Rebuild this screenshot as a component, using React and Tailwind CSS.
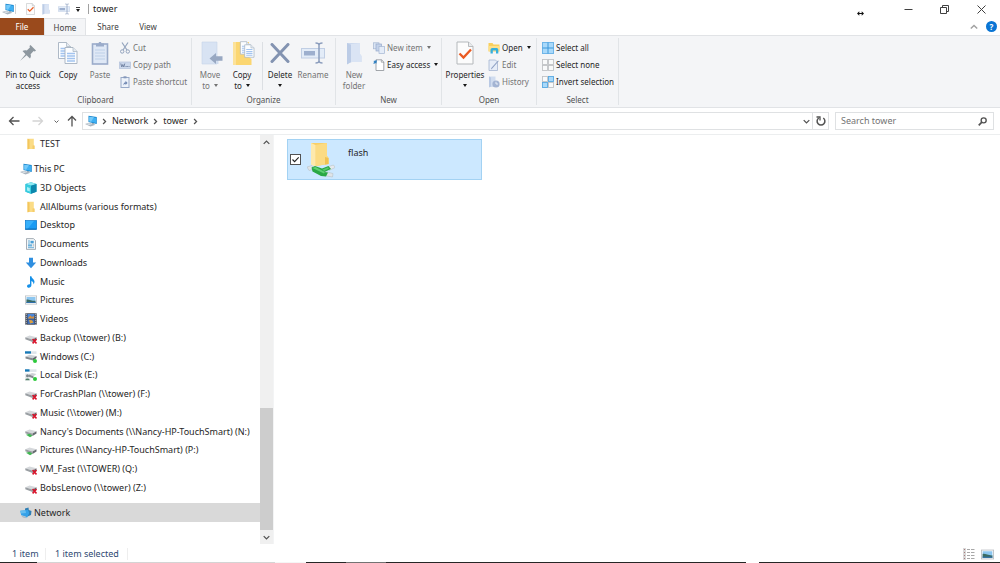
import React, { useState } from "react";

/* ---------- icons ---------- */

function ComputerIcon({ className }) {
  return (
    <svg viewBox="0 0 24 24" className={className} aria-hidden="true">
      <path d="M7 1.500 L23.500 4 L23.500 18 L7 14 Z" fill="#1583cb" />
      <path d="M8.500 3.300 L22.300 5.400 L22.300 16.200 L8.500 12.800 Z" fill="#3fb0f3" />
      <path d="M8.500 3.300 L18 4.700 L12 13.600 L8.500 12.800 Z" fill="#74cafa" />
      <path d="M14 15.800 L18 16.800 L19 19 L15 18.500 Z" fill="#6f8796" />
      <path d="M0 18 L8 15.500 L21 19.500 L11 23 Z" fill="#aab5bf" />
      <path d="M2.500 18 L8 16.500 L14 18.400 L8 20.200 Z" fill="#dde3e8" />
    </svg>
  );
}

function PropertiesIcon({ className }) {
  return (
    <svg viewBox="0 0 18 24" className={className} aria-hidden="true">
      <path d="M1 1 H12.500 L17 5.500 V23 H1 Z" fill="#fcfcfc" stroke="#b4b8bb" />
      <path d="M12.500 1 V5.500 H17" fill="#e9ebed" stroke="#a9adb1" strokeWidth=".8" />
      <path d="M3.500 12.500 L7.500 16.500 L15 8.500" fill="none" stroke="#ea5a22" strokeWidth="2.300" />
    </svg>
  );
}

function PaleFolderIcon({ className }) {
  return (
    <svg viewBox="0 0 16 24" className={className} aria-hidden="true">
      <path d="M1 2 H14 V13 L15.500 15 V21 H6 L1 23 Z" fill="#ccd9ee" />
      <path d="M1 2 L5 4 V21 L1 23.500 Z" fill="#bccce6" />
      <path d="M5 3 L14 2 V13 L15.500 15 V21 H5 Z" fill="#dae4f4" />
    </svg>
  );
}

function RenameIcon({ className }) {
  return (
    <svg viewBox="0 0 24 22" className={className} aria-hidden="true">
      <rect x=".5" y="6.500" width="23" height="9.500" fill="#e3ecf8" stroke="#c0cee4" />
      <rect x="3" y="9" width="11" height="4.500" fill="#9dafce" />
      <path d="M14.500 1 C16.500 1 18 1.500 18 3 V19 C18 20.500 16.500 21 14.500 21 M21.500 1 C19.500 1 18 1.500 18 3 M21.500 21 C19.500 21 18 20.500 18 19" fill="none" stroke="#8b9dbd" strokeWidth="1.500" />
    </svg>
  );
}

function PinIcon({ className }) {
  return (
    <svg viewBox="0 0 18 18" className={className} aria-hidden="true">
      <path d="M11.500 1 L17 6.500 L15.800 7.500 L14.600 7.100 L11.600 10.200 C12.200 12 11.900 13.300 11 14.400 L7.600 11.300 L1 17 L6.500 10.300 L3.500 7 C4.600 6.100 6.200 5.900 7.800 6.400 L10.900 3.500 L10.500 2.100 Z" fill="#8d979f" />
    </svg>
  );
}

function Sheet({ x, y }) {
  return (
    <g transform={"translate(" + x + " " + y + ")"}>
      <path d="M.5 .5 H8.500 L12.500 4.500 V16.500 H.5 Z" fill="#fbfdff" stroke="#a5b1bf" strokeWidth=".9" />
      <path d="M8.500 .5 V4.500 H12.500" fill="#e5eaf0" stroke="#a5b1bf" strokeWidth=".7" />
      <path d="M2.500 6.500 H10.500 M2.500 9 H10.500 M2.500 11.500 H10.500 M2.500 14 H10.500" stroke="#a3c4ef" strokeWidth="1.300" />
    </g>
  );
}

function CopyIcon({ className }) {
  return (
    <svg viewBox="0 0 20 24" className={className} aria-hidden="true">
      <Sheet x="0" y="1" />
      <Sheet x="6.500" y="6" />
    </svg>
  );
}

function PasteIcon({ className }) {
  return (
    <svg viewBox="0 0 18 24" className={className} aria-hidden="true">
      <rect x="1.500" y="3" width="15" height="20" fill="#dfe8f6" stroke="#9aabca" strokeWidth="1.600" />
      <path d="M5 5.500 V2.500 H7.500 L8 1 H10 L10.500 2.500 H13 V5.500 Z" fill="#9aabca" />
      <path d="M4 9 H14 M4 12 H14 M4 15 H14 M4 18 H14" stroke="#c9d7ed" strokeWidth="1.400" />
    </svg>
  );
}

function CutIcon({ className }) {
  return (
    <svg viewBox="0 0 12 12" className={className} aria-hidden="true">
      <path d="M3 .5 L8 8 M9 .5 L4 8" stroke="#93a3bd" strokeWidth="1.200" />
      <circle cx="3.200" cy="9.500" r="1.700" fill="none" stroke="#93a3bd" />
      <circle cx="8.800" cy="9.500" r="1.700" fill="none" stroke="#93a3bd" />
    </svg>
  );
}

function CopyPathIcon({ className }) {
  return (
    <svg viewBox="0 0 12 12" className={className} aria-hidden="true">
      <rect x=".4" y="3" width="11.200" height="6.500" fill="#ccd8ec" stroke="#b3c1da" strokeWidth=".7" />
      <path d="M1.800 4.500 L2.800 8 L3.800 5.500 L4.800 8 L5.800 4.500" fill="none" stroke="#6d7f9f" strokeWidth=".9" />
      <path d="M6.500 7.500 H10.500" stroke="#6d7f9f" strokeWidth=".9" strokeDasharray="1.200 .5" />
    </svg>
  );
}

function PasteShortcutIcon({ className }) {
  return (
    <svg viewBox="0 0 12 12" className={className} aria-hidden="true">
      <rect x="2" y="1.500" width="8" height="10" fill="#edf2fa" stroke="#97a9c8" />
      <rect x="4.500" y=".3" width="3" height="2" fill="#8598ba" />
      <path d="M4.500 9.500 C4.300 7.500 5 6.500 6.500 6.300 V4.800 L8.600 7 L6.500 9 V7.800 C5.500 7.800 5 8.500 4.500 9.500 Z" fill="#7188b2" />
    </svg>
  );
}

function MoveToIcon({ className }) {
  return (
    <svg viewBox="0 0 22 24" className={className} aria-hidden="true">
      <path d="M1 1 H16 V17 L17.500 18.500 V23 H1 Z" fill="#d2deef" />
      <path d="M1 1 H16 V23 H1 Z" fill="#d8e3f3" stroke="#c6d4e9" strokeWidth=".6" />
      <path d="M8.500 17.500 L15 12 V15.300 H21.500 V19.700 H15 V23 Z" fill="#98a8c2" />
    </svg>
  );
}

function CopyToIcon({ className }) {
  return (
    <svg viewBox="0 0 22 24" className={className} aria-hidden="true">
      <path d="M0 1 H16 V16 L18.500 18 V24 H0 Z" fill="#fbd671" />
      <path d="M0 1 H3 V24 H0 Z" fill="#fce29a" />
      <g transform="translate(7 -.5) scale(.78)">
        <Sheet x="0" y="1" />
        <Sheet x="5.500" y="5" />
      </g>
    </svg>
  );
}

function DeleteIcon({ className }) {
  return (
    <svg viewBox="0 0 20 20" className={className} aria-hidden="true">
      <path d="M2 1.500 L18 18.500 M18 1.500 L2 18.500" stroke="#8393b1" strokeWidth="3" strokeLinecap="round" />
    </svg>
  );
}

function NewItemIcon({ className }) {
  return (
    <svg viewBox="0 0 12 12" className={className} aria-hidden="true">
      <rect x=".5" y=".8" width="5.500" height="6" fill="#dbe5f4" stroke="#a4b5d2" strokeWidth=".7" />
      <rect x="3" y="2" width="5.500" height="7" fill="#c3d2ea" stroke="#96a9ca" strokeWidth=".7" />
      <rect x="6" y="4.500" width="5.500" height="7" fill="#e4ecf8" stroke="#a4b5d2" strokeWidth=".7" />
    </svg>
  );
}

function EasyAccessIcon({ className }) {
  return (
    <svg viewBox="0 0 12 12" className={className} aria-hidden="true">
      <path d="M3 .8 H8.500 L10.800 3 V11.500 H3 Z" fill="#fff" stroke="#8b9197" strokeWidth=".8" />
      <path d="M8.300 .8 V3.200 H10.800" fill="none" stroke="#8b9197" strokeWidth=".7" />
      <path d="M.3 2 L4 1.200 L3.300 4.800 L2.300 3.900 L.9 5 L.3 4 L1.400 3 Z" fill="#2f7fc1" />
    </svg>
  );
}

function OpenIcon({ className }) {
  return (
    <svg viewBox="0 0 12 12" className={className} aria-hidden="true">
      <path d="M.5 1 H4.500 L5.500 2.500 H11.500 V9.500 H.5 Z" fill="#f8cf5c" />
      <path d="M.5 4 H11.500 V9 H.5 Z" fill="#fde08a" />
      <path d="M2.500 11.500 V8 C2.500 6.500 3.500 6 5 6 H8 C9.500 6 10.300 6.500 10.300 8 V11.500 H8 V8.600 H4.800 V11.500 Z" fill="#35b0dd" />
    </svg>
  );
}

function EditIcon({ className }) {
  return (
    <svg viewBox="0 0 12 12" className={className} aria-hidden="true">
      <path d="M1 1 H7.500 L9.500 3 V11.500 H1 Z" fill="#e6edf8" stroke="#a5b5d1" strokeWidth=".8" />
      <path d="M10.800 2 L4 9.800 L3 10.500 L3.300 9 L10 1.500 Z" fill="#8c9fc3" />
    </svg>
  );
}

function HistoryIcon({ className }) {
  return (
    <svg viewBox="0 0 12 12" className={className} aria-hidden="true">
      <path d="M1 .5 H7.500 V11 H1 Z" fill="#d0dcef" />
      <path d="M1 .5 L3 1.500 V10.500 L1 11.500 Z" fill="#b9c9e4" />
      <circle cx="8" cy="8" r="3.600" fill="#a3b4d3" />
      <path d="M8 5.800 V8 H10" fill="none" stroke="#eef3fb" strokeWidth=".9" />
    </svg>
  );
}

function Squares({ className, filled, joined }) {
  const spots = [[0.5, 0.5], [6.5, 0.5], [0.5, 6.5], [6.5, 6.5]];
  if (joined) {
    return (
      <svg viewBox="0 0 12 12" className={className} aria-hidden="true">
        <rect x=".5" y=".5" width="11" height="11" fill="#a9d9fa" stroke="#6fb5e8" />
        <path d="M6 .5 V11.500 M.5 6 H11.500" stroke="#3d98da" />
      </svg>
    );
  }
  return (
    <svg viewBox="0 0 12 12" className={className} aria-hidden="true">
      {spots.map(([x, y], i) => (
        <rect
          key={i}
          x={x}
          y={y}
          width="5"
          height="5"
          fill={filled[i] ? "#a9d9fa" : "#f9fafb"}
          stroke={filled[i] ? "#58a8e0" : "#c0c3c6"}
          strokeWidth=".9"
        />
      ))}
    </svg>
  );
}

function SmallFolder({ className }) {
  return (
    <svg viewBox="0 0 12 12" className={className} aria-hidden="true">
      <path d="M2.500 .8 H8.800 V7 L9.500 8 V11 H2.500 Z" fill="#fbdc86" />
      <path d="M2.500 .8 L4.500 1.600 V10.800 L2.500 11.600 Z" fill="#f3c65c" />
      <path d="M7.500 7.500 H9.500 V11 H7.500 Z" fill="#f5cd6b" />
    </svg>
  );
}

function ObjectsIcon({ className }) {
  return (
    <svg viewBox="0 0 12 12" className={className} aria-hidden="true">
      <path d="M.5 2 L6 .3 L11.500 2 V9.800 L6 11.700 L.5 9.800 Z" fill="#17a9c7" />
      <path d="M.5 2 L6 .3 L11.500 2 L6 3.800 Z" fill="#8de9f3" />
      <path d="M.5 2 L6 3.800 V11.700 L.5 9.800 Z" fill="#37cde0" />
      <path d="M6 3.800 L11.500 2 V9.800 L6 11.700 Z" fill="#0c87ad" />
      <path d="M2 5 L4.800 5.900 V9.500 L2 8.600 Z" fill="#a5f0f7" />
    </svg>
  );
}

function DesktopIcon({ className }) {
  return (
    <svg viewBox="0 0 12 12" className={className} aria-hidden="true">
      <rect x=".4" y="1.600" width="11.200" height="8.800" fill="#1a9bf4" stroke="#0d78c8" strokeWidth=".7" />
      <path d="M.8 2 H9 L2.500 10 H.8 Z" fill="#37b0fb" />
      <path d="M.5 10 H11.500" stroke="#0a5c9e" strokeWidth=".7" />
    </svg>
  );
}

function DocumentsIcon({ className }) {
  return (
    <svg viewBox="0 0 12 12" className={className} aria-hidden="true">
      <path d="M1.500 .6 H8.500 L10.500 2.600 V11.400 H1.500 Z" fill="#f4f7f9" stroke="#8f9ba5" strokeWidth=".8" />
      <path d="M3 3 H5 M3 5 H5 M3 9.700 H9" stroke="#5aa5d4" strokeWidth=".9" />
      <rect x="5.500" y="2.800" width="3.200" height="2.600" fill="#4a9fd6" />
      <rect x="3" y="6.300" width="4" height="2.200" fill="#6ab2de" />
      <path d="M7.700 6.800 H9.200 M7.700 8 H9.200" stroke="#7f8d98" strokeWidth=".6" />
    </svg>
  );
}

function DownloadsIcon({ className }) {
  return (
    <svg viewBox="0 0 12 12" className={className} aria-hidden="true">
      <path d="M4 .8 H8 V5.500 H11.200 L6 11.300 L.8 5.500 H4 Z" fill="#2f8fe0" />
    </svg>
  );
}

function MusicIcon({ className }) {
  return (
    <svg viewBox="0 0 12 12" className={className} aria-hidden="true">
      <path d="M5 .3 H6.400 C6.600 2.500 9.700 3.300 9.500 6 C9.400 7 9 7.800 8.400 8.400 C8.700 6.500 7.800 5.500 6.400 5 V9.300 C6.400 10.700 5.200 11.700 3.800 11.700 C2.700 11.700 2 11 2 10.200 C2 9 3.300 8.100 5 8.300 Z" fill="#1590e8" />
    </svg>
  );
}

function PicturesIcon({ className }) {
  return (
    <svg viewBox="0 0 12 12" className={className} aria-hidden="true">
      <rect x=".4" y="1.900" width="11.200" height="8.200" fill="#fff" stroke="#b9bec2" strokeWidth=".8" />
      <rect x="1.500" y="3" width="9" height="6" fill="#8cc6f0" />
      <path d="M1.500 5.500 C4 5 6.500 7 10.500 6.800 V9 H1.500 Z" fill="#3b6b62" />
      <path d="M1.500 8 H10.500 V9 H1.500 Z" fill="#2f6fae" />
    </svg>
  );
}

function VideosIcon({ className }) {
  return (
    <svg viewBox="0 0 12 12" className={className} aria-hidden="true">
      <rect x=".3" y=".3" width="11.400" height="11.400" fill="#3a3f4a" />
      <path d="M1.300 .8 V11.500 M10.700 .8 V11.500" stroke="#d7dade" strokeWidth="1" strokeDasharray="1 1" />
      <rect x="2.500" y="1" width="7" height="4.700" fill="#4a86d8" />
      <rect x="2.500" y="6.300" width="7" height="4.700" fill="#3c6fbd" />
      <path d="M3 5 L5.500 2.500 L7 4 L9 3 V5.500 H3 Z" fill="#d68f3c" />
      <path d="M4 7 L7 7.300 L8.500 9.500 L5 10.500 Z" fill="#e0a23f" />
    </svg>
  );
}

function Drive() {
  return (
    <g>
      <path d="M.3 5.200 L4.500 3.500 L11.500 5.300 L7.500 7.500 Z" fill="#d5d8db" />
      <path d="M.3 5.200 L7.500 7.500 V10 L.3 7.300 Z" fill="#9a9fa3" />
      <path d="M7.500 7.500 L11.500 5.300 V7.600 L7.500 10 Z" fill="#666b70" />
    </g>
  );
}

function OfflineDriveIcon({ className }) {
  return (
    <svg viewBox="0 0 12 12" className={className} aria-hidden="true">
      <Drive />
      <path d="M7.600 7 L11.500 11.400 M11.500 7 L7.600 11.400" stroke="#d8142b" strokeWidth="1.600" />
    </svg>
  );
}

function NetworkDriveIcon({ className }) {
  return (
    <svg viewBox="0 0 12 12" className={className} aria-hidden="true">
      <Drive />
      <path d="M1 8.800 L4.500 7.800 L7.500 9.800 L5 11.200 Z" fill="#42b553" />
    </svg>
  );
}

function LocalDriveIcon({ className }) {
  return (
    <svg viewBox="0 0 12 12" className={className} aria-hidden="true">
      <rect x="0" y=".3" width="11.500" height="2.600" fill="#dfe5ea" />
      <rect x="0" y=".3" width="6" height="2.300" fill="#1679b8" />
      <path d="M.5 5.500 L4.500 3.800 L11.500 5 L8 7.300 Z" fill="#cdd1d5" />
      <path d="M.5 5.500 L8 7.300 V9.600 L.5 7.400 Z" fill="#858b90" />
      <path d="M8 7.300 L11.500 5 V7 L8 9.600 Z" fill="#5d6267" />
      <circle cx="10" cy="10" r="2" fill="#2bc93a" />
    </svg>
  );
}

function UserDriveIcon({ className }) {
  return (
    <svg viewBox="0 0 12 12" className={className} aria-hidden="true">
      <rect x="0" y=".3" width="11.500" height="2.600" fill="#dfe5ea" />
      <rect x="0" y=".3" width="4.500" height="2.300" fill="#1679b8" />
      <rect x="0" y="4.500" width="5.500" height="7" fill="#e6eaec" />
      <path d="M4 5.500 L7 4 L11.500 5 L8.500 7.300 Z" fill="#cdd1d5" />
      <path d="M4 5.500 L8.500 7.300 V9.600 L4 7.800 Z" fill="#858b90" />
      <circle cx="2.500" cy="6.700" r="1.500" fill="#7b858c" />
      <path d="M.3 11.300 C.3 8.800 4.700 8.800 4.700 11.300 Z" fill="#4f7f68" />
      <circle cx="10" cy="10" r="2" fill="#2bc93a" />
    </svg>
  );
}

function NetworkIcon({ className }) {
  return (
    <svg viewBox="0 0 12 12" className={className} aria-hidden="true">
      <path d="M5 1.500 L8.500 .5 L8.800 3 L11.500 4 L11 8 L7.500 9.500 L5 8 Z" fill="#2f7fb5" />
      <path d="M.3 3.800 L5.500 3.200 L8 2.800 L9.300 6 L7 10.800 L5 9.300 L1.200 8.300 Z" fill="#35a1e8" />
      <path d="M.3 3.800 L5.500 3.200 L6 6 L.8 6.500 Z" fill="#66bdf0" />
      <path d="M1.500 9 L5 9.600 L6.500 11.300 L3 10.500 Z" fill="#9fb4c4" />
    </svg>
  );
}

function NetworkFolderIcon({ className }) {
  return (
    <svg viewBox="0 0 28 36" className={className} aria-hidden="true">
      <path d="M4 1 L20 1 V14 L21.500 16 V22 L9 24 L4 22 Z" fill="#f8cf67" />
      <path d="M8.500 3 L20 1 V14 L21.500 16 V22 L8.500 24 Z" fill="#fbdb83" />
      <path d="M4 1 L8.500 3 V25 L4 22.500 Z" fill="#fde9ad" />
      <path d="M18 15 L21.500 16 V22 L18 22.500 Z" fill="#f1c252" />
      <path d="M0 25 L5 23.500 L7 27 L2 28.500 Z" fill="#dfe4e8" stroke="#b3babf" strokeWidth=".5" />
      <path d="M20 25 L26.500 23 L28 25.500 L22 28.500 Z" fill="#e6eaed" stroke="#b3babf" strokeWidth=".5" />
      <path d="M18 29.500 L26 31.500 L25.500 35 L17 33.500 Z" fill="#dfe4e8" stroke="#b3babf" strokeWidth=".5" />
      <path d="M4.500 25.500 L8 24 L15 26.500 L21.500 24 L24 27 L17.500 30 L21 30.500 L19 34.500 L14 34 L5.500 29.500 Z" fill="#2aa844" />
      <path d="M5.500 26 L8.500 25 L18 30 L17 31.500 Z" fill="#5fd073" />
      <path d="M15.500 27.500 L21 25.300 L22 26.500 L17 29 Z" fill="#58c86c" />
    </svg>
  );
}

function Caret({ className = "text-neutral-900" }) {
  return (
    <svg viewBox="0 0 4 3" className={"h-[3px] w-1 shrink-0 " + className} aria-hidden="true">
      <path d="M0 0 H4 L2 3 Z" fill="currentColor" />
    </svg>
  );
}

function Chevron({ d, className }) {
  return (
    <svg viewBox="0 0 10 10" className={className} aria-hidden="true">
      <path d={d} fill="none" stroke="currentColor" strokeWidth="1.800" />
    </svg>
  );
}

const RIGHT = "M3 1.500 L6.500 5 L3 8.500";
const DOWN = "M1 3 L5 7 L9 3";
const UP = "M1 7 L5 3 L9 7";

/* ---------- ribbon ---------- */

function BigButton({ icon: Icon, iconClass, width, lines, caret, disabled }) {
  return (
    <button
      type="button"
      disabled={disabled}
      className={width + " flex shrink-0 flex-col items-center pt-[3px] leading-[11px] " + (disabled ? "text-neutral-500" : "text-neutral-800")}
    >
      <span className="mb-1 flex h-6 items-center">
        <Icon className={iconClass} />
      </span>
      {lines.map((line, i) => (
        <span key={line} className="flex items-center gap-1 whitespace-nowrap">
          {line}
          {caret === "inline" && i === lines.length - 1 && (
            <Caret className={disabled ? "text-neutral-500" : "text-neutral-900"} />
          )}
        </span>
      ))}
      {caret === "below" && (
        <span className="flex h-[11px] items-center">
          <Caret />
        </span>
      )}
    </button>
  );
}

function SmallButton({ icon, label, caret, disabled }) {
  return (
    <button
      type="button"
      disabled={disabled}
      className={"flex h-[17px] items-center gap-0.5 whitespace-nowrap " + (disabled ? "text-neutral-500" : "text-neutral-800")}
    >
      {icon}
      <span>{label}</span>
      {caret && <span className="pl-0.5"><Caret className={disabled ? "text-neutral-500" : "text-neutral-900"} /></span>}
    </button>
  );
}

function Group({ label, width, children }) {
  return (
    <section aria-label={label} className={width + " my-0.5 flex shrink-0 flex-col border-r border-[#e1e4e7]"}>
      <div className="flex flex-1 items-start">{children}</div>
      <h2 className="text-center leading-[11px] text-neutral-600">{label}</h2>
    </section>
  );
}

const small = "h-3 w-3 shrink-0";

function Ribbon() {
  return (
    <div className="flex h-[73px] shrink-0 border-y border-[#e1e3e6] bg-[#f4f5f7] text-[8px]">
      <Group label="Clipboard" width="w-48">
        <div className="flex pl-1">
          <BigButton icon={PinIcon} iconClass="h-[18px] w-[18px]" width="w-12" lines={["Pin to Quick", "access"]} />
          <BigButton icon={CopyIcon} iconClass="h-6 w-5" width="w-8" lines={["Copy"]} />
          <BigButton icon={PasteIcon} iconClass="h-6 w-[18px]" width="w-8" lines={["Paste"]} disabled />
        </div>
        <div className="flex flex-col pt-px pl-[3px]">
          <SmallButton icon={<CutIcon className={small} />} label="Cut" disabled />
          <SmallButton icon={<CopyPathIcon className={small} />} label="Copy path" disabled />
          <SmallButton icon={<PasteShortcutIcon className={small} />} label="Paste shortcut" disabled />
        </div>
      </Group>
      <Group label="Organize" width="w-36">
        <BigButton icon={MoveToIcon} iconClass="ml-1 h-6 w-[22px]" width="w-9" lines={["Move", "to"]} caret="inline" disabled />
        <BigButton icon={CopyToIcon} iconClass="ml-1 h-6 w-[22px]" width="w-7" lines={["Copy", "to"]} caret="inline" />
        <div className="mt-1 ml-1.5 h-12 w-px bg-[#dcdfe3]" />
        <BigButton icon={DeleteIcon} iconClass="h-5 w-5" width="w-[34px]" lines={["Delete"]} caret="below" />
        <BigButton icon={RenameIcon} iconClass="h-[22px] w-6" width="w-8" lines={["Rename"]} disabled />
      </Group>
      <Group label="New" width="w-[106px]">
        <BigButton icon={PaleFolderIcon} iconClass="h-6 w-4" width="w-9" lines={["New", "folder"]} disabled />
        <div className="flex flex-col pt-px pl-px">
          <SmallButton icon={<NewItemIcon className={small} />} label="New item" caret disabled />
          <SmallButton icon={<EasyAccessIcon className={small} />} label="Easy access" caret />
        </div>
      </Group>
      <Group label="Open" width="w-[95px]">
        <BigButton icon={PropertiesIcon} iconClass="h-6 w-[18px]" width="w-[46px]" lines={["Properties"]} caret="below" />
        <div className="flex flex-col pt-px">
          <SmallButton icon={<OpenIcon className={small} />} label="Open" caret />
          <SmallButton icon={<EditIcon className={small} />} label="Edit" disabled />
          <SmallButton icon={<HistoryIcon className={small} />} label="History" disabled />
        </div>
      </Group>
      <Group label="Select" width="w-[82px]">
        <div className="flex flex-col pt-px pl-[5px]">
          <SmallButton icon={<Squares className={small} joined />} label="Select all" />
          <SmallButton icon={<Squares className={small} filled={[0, 0, 0, 0]} />} label="Select none" />
          <SmallButton icon={<Squares className={small} filled={[0, 1, 1, 0]} />} label="Invert selection" />
        </div>
      </Group>
    </div>
  );
}

/* ---------- window chrome ---------- */

function TitleBar() {
  return (
    <header className="flex h-[18px] shrink-0 items-center">
      <ComputerIcon className="ml-0.5 h-3 w-3" />
      <span className="ml-px h-2.5 w-px bg-neutral-300" />
      <button type="button" aria-label="Properties" className="ml-2 flex w-3 justify-center">
        <PropertiesIcon className="h-3 w-[9px]" />
      </button>
      <button type="button" aria-label="New folder" className="ml-1 flex w-3 justify-center">
        <PaleFolderIcon className="h-3 w-2" />
      </button>
      <button type="button" aria-label="Rename" className="ml-1 flex w-4 justify-center">
        <RenameIcon className="h-3 w-3" />
      </button>
      <button type="button" aria-label="Customize toolbar" className="ml-0.5 flex w-2 flex-col items-center gap-px">
        <span className="h-px w-1 bg-neutral-700" />
        <Caret />
      </button>
      <span className="ml-1.5 h-2.5 w-px bg-neutral-400" />
      <h1 className="ml-1 text-neutral-900">tower</h1>
      <div className="ml-auto flex items-center text-neutral-700">
        <svg viewBox="0 0 7 5" className="mt-2 mr-[26px] h-[5px] w-[7px]" aria-hidden="true">
          <path d="M0 2.500 L2.300 .3 V1.900 H4.700 V.3 L7 2.500 L4.700 4.700 V3.100 H2.300 V4.700 Z" fill="#111" />
        </svg>
        <button type="button" aria-label="Minimize" className="flex w-9 justify-center">
          <svg viewBox="0 0 9 9" className="h-[9px] w-[9px]"><path d="M.5 4.500 H8.500" stroke="currentColor" /></svg>
        </button>
        <button type="button" aria-label="Restore" className="flex w-9 justify-center">
          <svg viewBox="0 0 9 9" className="h-[9px] w-[9px]">
            <path d="M.5 2.500 H6.500 V8.500 H.5 Z M2.500 2 V.5 H8.500 V6.500 H7" fill="none" stroke="currentColor" />
          </svg>
        </button>
        <button type="button" aria-label="Close" className="flex w-[38px] justify-center">
          <svg viewBox="0 0 9 9" className="h-[9px] w-[9px]"><path d="M.5 .5 L8.500 8.500 M8.500 .5 L.5 8.500" stroke="currentColor" /></svg>
        </button>
      </div>
    </header>
  );
}

function TabStrip() {
  return (
    <nav aria-label="Ribbon tabs" className="flex h-[17px] shrink-0 items-stretch text-[8px] text-neutral-700">
      <button type="button" className="w-11 bg-[#9a4a1c] text-white">File</button>
      <button type="button" className="-mb-px w-[42px] border-x border-t border-[#e1e3e6] bg-[#f4f5f7]">Home</button>
      <button type="button" className="w-11">Share</button>
      <button type="button" className="w-9">View</button>
      <div className="ml-auto flex items-center gap-2 pr-[3px]">
        <button type="button" aria-label="Minimize the ribbon">
          <Chevron d={UP} className="h-2 w-2 text-neutral-400" />
        </button>
        <button type="button" aria-label="Help" className="flex h-[11px] w-[11px] items-center justify-center rounded-full bg-[#0a75d4] font-bold text-white">
          ?
        </button>
      </div>
    </nav>
  );
}

function Arrow({ d, className }) {
  return (
    <svg viewBox="0 0 12 12" className={"h-3 w-3 " + className} aria-hidden="true">
      <path d={d} fill="none" stroke="currentColor" strokeWidth="1.300" />
    </svg>
  );
}

function AddressBar() {
  const [query, setQuery] = useState("");
  return (
    <div className="flex h-[27px] shrink-0 items-center border-b border-[#eceeef] pr-1.5 text-neutral-600">
      <button type="button" aria-label="Back" className="ml-2 w-3"><Arrow d="M11.500 6 H1.500 M5.500 2 L1.500 6 L5.500 10" className="" /></button>
      <button type="button" aria-label="Forward" disabled className="ml-3 w-3"><Arrow d="M.5 6 H10.500 M6.500 2 L10.500 6 L6.500 10" className="text-neutral-300" /></button>
      <button type="button" aria-label="Recent locations" className="ml-2 flex w-2 justify-center"><Chevron d={DOWN} className="h-[5px] w-[5px]" /></button>
      <button type="button" aria-label="Up" className="ml-1.5 w-3"><Arrow d="M6 11.500 V1.500 M2 5.500 L6 1.500 L10 5.500" className="" /></button>
      <div className="ml-1 flex h-[18px] flex-1 items-center border border-[#dfe1e3] text-neutral-800">
        <ComputerIcon className="ml-0.5 h-3 w-3" />
        <Chevron d={RIGHT} className="ml-1 h-[7px] w-[7px] text-neutral-600" />
        <a href="#network" className="ml-1">Network</a>
        <Chevron d={RIGHT} className="ml-1 h-[7px] w-[7px] text-neutral-600" />
        <a href="#tower" className="ml-1">tower</a>
        <Chevron d={RIGHT} className="ml-1 h-[7px] w-[7px] text-neutral-600" />
        <button type="button" aria-label="Previous locations" className="ml-auto flex w-3 justify-center text-neutral-600">
          <Chevron d={DOWN} className="h-[7px] w-[7px]" />
        </button>
        <button type="button" aria-label="Refresh" className="flex h-full w-4 items-center justify-center border-l border-[#dfe1e3] text-neutral-600">
          <svg viewBox="0 0 10 10" className="h-2.5 w-2.5">
            <path d="M7.300 2 A3.900 3.900 0 1 1 2.700 2" fill="none" stroke="currentColor" strokeWidth="1.500" />
            <path d="M.5 1 H4 V4.500" fill="none" stroke="currentColor" strokeWidth="1.300" />
          </svg>
        </button>
      </div>
      <label className="ml-1.5 flex h-[18px] w-[159px] items-center border border-[#dfe1e3] pr-1.5">
        <input
          type="search"
          aria-label="Search tower"
          placeholder="Search tower"
          value={query}
          onChange={(e) => setQuery(e.target.value)}
          className="w-0 min-w-0 flex-1 bg-transparent pl-[5px] outline-none placeholder:text-neutral-500"
        />
        <svg viewBox="0 0 10 10" className="h-[9px] w-[9px]" aria-hidden="true">
          <circle cx="6.300" cy="3.700" r="2.800" fill="none" stroke="currentColor" strokeWidth="1.500" />
          <path d="M4.300 5.700 L.8 9.200" stroke="currentColor" strokeWidth="1.900" />
        </svg>
      </label>
    </div>
  );
}

/* ---------- navigation pane ---------- */

const places = [
  ["3D Objects", ObjectsIcon],
  ["AllAlbums (various formats)", SmallFolder],
  ["Desktop", DesktopIcon],
  ["Documents", DocumentsIcon],
  ["Downloads", DownloadsIcon],
  ["Music", MusicIcon],
  ["Pictures", PicturesIcon],
  ["Videos", VideosIcon],
  ["Backup (\\\\tower) (B:)", OfflineDriveIcon],
  ["Windows (C:)", LocalDriveIcon],
  ["Local Disk (E:)", UserDriveIcon],
  ["ForCrashPlan (\\\\tower) (F:)", OfflineDriveIcon],
  ["Music (\\\\tower) (M:)", OfflineDriveIcon],
  ["Nancy's Documents (\\\\Nancy-HP-TouchSmart) (N:)", NetworkDriveIcon],
  ["Pictures (\\\\Nancy-HP-TouchSmart) (P:)", NetworkDriveIcon],
  ["VM_Fast (\\\\TOWER) (Q:)", OfflineDriveIcon],
  ["BobsLenovo (\\\\tower) (Z:)", OfflineDriveIcon],
];

function TreeRow({ icon: Icon, label, root, selected }) {
  return (
    <li className="flex min-h-4 flex-1">
      <button
        type="button"
        aria-current={selected ? "true" : undefined}
        className={
          "flex w-full items-center whitespace-nowrap text-left " +
          (root ? "gap-0.5 pl-5 " : "gap-[3px] pl-[25px] ") +
          (selected ? "bg-[#d9d9d9]" : "")
        }
      >
        <Icon className="h-3 w-3 shrink-0" />
        {label}
      </button>
    </li>
  );
}

function NavigationPane() {
  return (
    <aside className="flex w-[274px] shrink-0 border-r border-[#f3f4f5]">
      <ul className="flex min-w-0 flex-1 flex-col pb-[22px] text-neutral-800">
        <TreeRow icon={SmallFolder} label="TEST" />
        <li className="h-1.5 shrink-0" aria-hidden="true" />
        <TreeRow icon={ComputerIcon} label="This PC" root />
        {places.map(([label, icon]) => (
          <TreeRow key={label} icon={icon} label={label} />
        ))}
        <li className="h-1.5 shrink-0" aria-hidden="true" />
        <TreeRow icon={NetworkIcon} label="Network" root selected />
      </ul>
      <div className="flex w-[13px] flex-col bg-[#f0f0f0] text-neutral-600">
        <button type="button" aria-label="Scroll up" className="flex h-3.5 items-center justify-center">
          <Chevron d={UP} className="h-[7px] w-[7px]" />
        </button>
        <div className="flex flex-1 flex-col justify-end">
          <div className="h-[32%] bg-[#cdcdcd]" />
        </div>
        <button type="button" aria-label="Scroll down" className="flex h-3.5 items-center justify-center">
          <Chevron d={DOWN} className="h-[7px] w-[7px]" />
        </button>
      </div>
    </aside>
  );
}

/* ---------- content ---------- */

function FileList() {
  const [checked, setChecked] = useState(true);
  return (
    <main className="min-w-0 flex-1 pt-1 pl-[13px]">
      <label className="flex h-[41px] w-[195px] items-center border border-[#a3d2f3] bg-[#cce8ff] pl-0.5">
        <span className="grid h-[11px] w-[11px] shrink-0">
          <input
            type="checkbox"
            checked={checked}
            onChange={(e) => setChecked(e.target.checked)}
            className="col-start-1 row-start-1 h-[11px] w-[11px] appearance-none border border-neutral-600 bg-white"
          />
          {checked && (
            <svg viewBox="0 0 11 11" className="pointer-events-none col-start-1 row-start-1 h-[11px] w-[11px]" aria-hidden="true">
              <path d="M2.500 5.500 L4.600 7.600 L8.700 3.400" fill="none" stroke="#222" strokeWidth="1.100" />
            </svg>
          )}
        </span>
        <NetworkFolderIcon className="ml-1.5 h-9 w-7 shrink-0" />
        <span className="ml-[13px] self-start pt-[7px] text-neutral-800">flash</span>
      </label>
    </main>
  );
}

function StatusBar() {
  return (
    <footer className="flex h-[18px] shrink-0 items-center pt-0.5 pr-1.5 pl-3 text-[#2f4a73]">
      <span className="w-[34px] border-r border-[#eeeeee]">1 item</span>
      <span className="border-r border-[#eeeeee] pr-2 pl-[9px]">1 item selected</span>
      <div className="ml-auto flex items-center gap-1.5">
        <button type="button" aria-label="Details view">
          <svg viewBox="0 0 12 12" className="h-3 w-3">
            <rect x="0" y="0" width="3" height="12" fill="#d8d8d8" />
            <path d="M1.500 1 V12" stroke="#a87a7a" strokeWidth="1" strokeDasharray="1 2" />
            <path d="M4 1.500 H7 M8 1.500 H11.500 M4 4.500 H7 M8 4.500 H11.500 M4 7.500 H7 M8 7.500 H11.500 M4 10.500 H7 M8 10.500 H11.500" stroke="#a8a8a8" />
          </svg>
        </button>
        <button type="button" aria-label="Large icons view">
          <PicturesIcon className="h-[13px] w-[13px]" />
        </button>
      </div>
    </footer>
  );
}

function TaskbarEdge() {
  return (
    <div className="flex h-px shrink-0" aria-hidden="true">
      <div className="w-[3.7%] bg-neutral-800" />
      <div className="w-[23.800%] bg-neutral-300" />
      <div className="w-[3.1%] bg-neutral-100" />
      <div className="w-[4%] bg-neutral-800" />
      <div className="w-[4%] bg-neutral-500" />
      <div className="w-[36%] bg-neutral-800" />
      <div className="w-[1.3%] bg-white" />
      <div className="flex-1 bg-neutral-800" />
    </div>
  );
}

export default function App() {
  return (
    <div className="flex min-h-screen flex-col bg-white font-['Noto_Sans','Open_Sans',sans-serif] text-[9px] leading-3">
      <TitleBar />
      <TabStrip />
      <Ribbon />
      <AddressBar />
      <div className="flex flex-1">
        <NavigationPane />
        <FileList />
      </div>
      <StatusBar />
      <TaskbarEdge />
    </div>
  );
}
